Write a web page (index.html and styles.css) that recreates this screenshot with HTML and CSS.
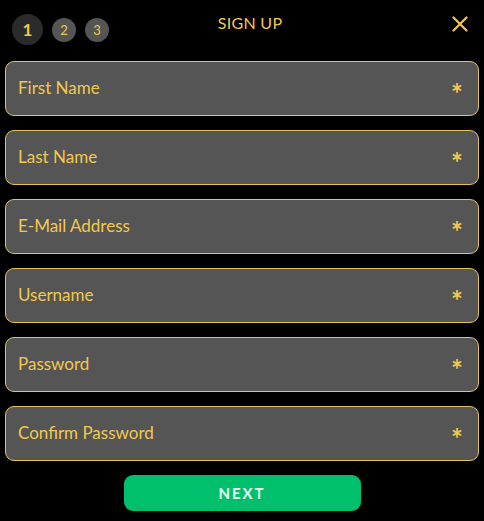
FILE: index.html
```html
<!DOCTYPE html>
<html>
<head>
<meta charset="utf-8">
<link rel="stylesheet" href="styles.css">
</head>
<body>
<div class="modal">
  <header class="head">
    <div class="steps">
      <span class="step active">1</span>
      <span class="step">2</span>
      <span class="step">3</span>
    </div>
    <h1 class="title">SIGN UP</h1>
    <button class="close" aria-label="Close">
      <svg width="16" height="16" viewBox="0 0 16 16"><path d="M1.5 1.5 L14.5 14.5 M14.5 1.5 L1.5 14.5" stroke="#f2c94c" stroke-width="2.2" stroke-linecap="round" fill="none"/></svg>
    </button>
  </header>
  <form class="form">
    <label class="field"><span class="label">First Name</span><span class="req">*</span></label>
    <label class="field"><span class="label">Last Name</span><span class="req">*</span></label>
    <label class="field"><span class="label">E-Mail Address</span><span class="req">*</span></label>
    <label class="field"><span class="label">Username</span><span class="req">*</span></label>
    <label class="field"><span class="label">Password</span><span class="req">*</span></label>
    <label class="field"><span class="label">Confirm Password</span><span class="req">*</span></label>
    <div class="actions"><button type="button" class="next">NEXT</button></div>
  </form>
</div>
</body>
</html>
```
FILE: styles.css
```css
* { box-sizing: border-box; }
html, body { margin: 0; padding: 0; background: #000; }
body { font-family: Lato, "Open Sans", sans-serif; color: #f2c94c; width: 484px; height: 521px; overflow: hidden; }
.modal { padding: 0 5px; }
.head { position: relative; height: 61px; display: flex; align-items: flex-start; }
.steps { display: flex; align-items: center; gap: 9px; margin-left: 7px; margin-top: 14px; height: 31px; }
.step { width: 24px; height: 24px; border-radius: 50%; background: #555; color: #f2c94c; font-size: 13px; font-weight: 400; display: flex; align-items: center; justify-content: center; }
.step.active { width: 31px; height: 31px; background: #2b2b2b; font-size: 17px; font-weight: 700; }
.title { position: absolute; left: 0; right: 0; top: 13px; margin: 0; text-align: center; font-size: 16px; font-weight: 400; letter-spacing: 0.3px; color: #f2c94c; padding-left: 16px; }
.close { position: absolute; right: 11px; top: 16px; background: none; border: 0; padding: 0; width: 16px; height: 16px; display: flex; }
.form { display: flex; flex-direction: column; gap: 14px; }
.field { height: 55px; background: #555; border: 1px solid #e6c25a; border-radius: 9px; display: flex; align-items: center; justify-content: space-between; padding: 0 15px 2px 12px; font-size: 17px; }
.label { color: #f2c94c; }
.req { font-size: 28px; font-weight: 700; line-height: 1; margin-top: 10px; color: #f2c94c; }
.actions { display: flex; justify-content: center; }
.next { width: 237px; height: 36px; border: 0; border-radius: 9px; background: #00c06d; color: #e8fff2; font-family: Lato, sans-serif; font-size: 15px; font-weight: 700; letter-spacing: 2px; padding-bottom: 2px; }
```
